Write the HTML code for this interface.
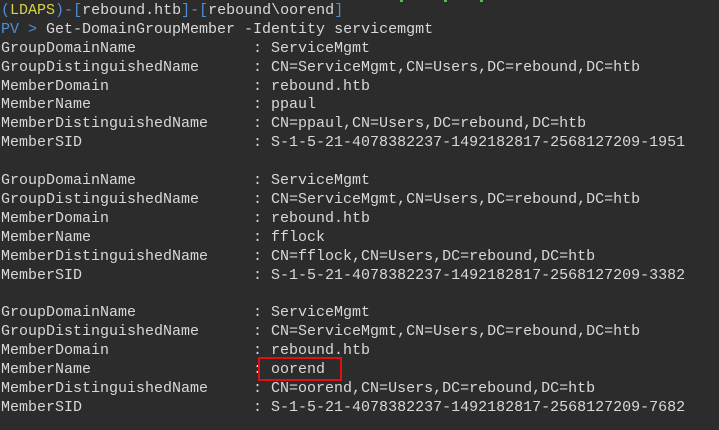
<!DOCTYPE html>
<html><head><style>
html,body{margin:0;padding:0;background:#2c2c2c;width:719px;height:430px;overflow:hidden}
pre{margin:0;position:absolute;left:1px;top:1.9px;font-family:"Liberation Mono",monospace;font-size:15px;line-height:18.9px;color:#d8d8d8;letter-spacing:0}
.b{color:#4a90d9}.y{color:#d5d54a}.d{color:#8a8a8a}
.box{position:absolute;left:258px;top:357px;width:80px;height:20px;border:2px solid #e01010}
.gm{position:absolute;top:0;height:2px;width:3px;background:#4fc04f}
</style></head><body>
<div class="gm" style="left:400px"></div><div class="gm" style="left:444px"></div><div class="gm" style="left:480px"></div>
<pre><span class="b">(</span><span class="y">LDAPS</span><span class="b">)</span><span class="d">-</span><span class="b">[</span>rebound.htb<span class="b">]</span><span class="d">-</span><span class="b">[</span>rebound\oorend<span class="b">]</span>
<span class="b">PV &gt;</span> Get-DomainGroupMember -Identity servicemgmt
GroupDomainName             : ServiceMgmt
GroupDistinguishedName      : CN=ServiceMgmt,CN=Users,DC=rebound,DC=htb
MemberDomain                : rebound.htb
MemberName                  : ppaul
MemberDistinguishedName     : CN=ppaul,CN=Users,DC=rebound,DC=htb
MemberSID                   : S-1-5-21-4078382237-1492182817-2568127209-1951

GroupDomainName             : ServiceMgmt
GroupDistinguishedName      : CN=ServiceMgmt,CN=Users,DC=rebound,DC=htb
MemberDomain                : rebound.htb
MemberName                  : fflock
MemberDistinguishedName     : CN=fflock,CN=Users,DC=rebound,DC=htb
MemberSID                   : S-1-5-21-4078382237-1492182817-2568127209-3382

GroupDomainName             : ServiceMgmt
GroupDistinguishedName      : CN=ServiceMgmt,CN=Users,DC=rebound,DC=htb
MemberDomain                : rebound.htb
MemberName                  : oorend
MemberDistinguishedName     : CN=oorend,CN=Users,DC=rebound,DC=htb
MemberSID                   : S-1-5-21-4078382237-1492182817-2568127209-7682</pre>
<div class="box"></div>
</body></html>
